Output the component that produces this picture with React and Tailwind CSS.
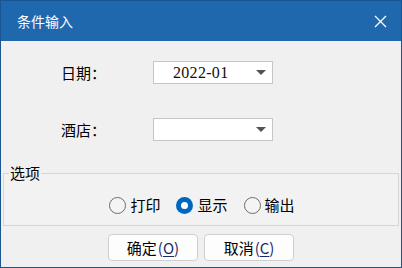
const cjk = { fontFamily: '"Noto Sans CJK SC", "Noto Sans", sans-serif' }

const Caret = () => (
  <svg width="10" height="5" viewBox="0 0 10 5" className="shrink-0">
    <polygon points="0,0 10,0 5,5" fill="#505550" />
  </svg>
)

const Select = ({ value }) => (
  <div className="w-[120px] h-[23px] bg-white border border-[#c6c6c6] flex items-center pl-[19px] pr-[6px]">
    <span
      className="flex-1 text-[16px] leading-none text-[#101010] tracking-[0.3px]"
      style={{ fontFamily: '"Liberation Serif", serif' }}
    >
      {value}
    </span>
    <Caret />
  </div>
)

const Radio = ({ label, checked }) => (
  <label className="flex items-center gap-[4px]">
    {checked ? (
      <span className="w-[17px] h-[17px] rounded-full bg-[#0067c0] flex items-center justify-center">
        <span className="w-[7px] h-[7px] rounded-full bg-white" />
      </span>
    ) : (
      <span className="w-[17px] h-[17px] rounded-full border border-[#6b6b6b] bg-[#f4f4f4]" />
    )}
    <span className="text-[15px] leading-[20px] text-black">{label}</span>
  </label>
)

const Button = ({ text, hotkey }) => (
  <button className="w-[90px] h-[27px] rounded-[4px] border border-[#cfcfcf] bg-[#fdfdfd] text-[15px] leading-none text-black flex items-center justify-center">
    {text}
    <span className="ml-[1px] text-[#1c2a6a]">
      (<span className="underline underline-offset-2">{hotkey}</span>)
    </span>
  </button>
)

export default function App() {
  return (
    <div className="w-[402px] h-[268px] bg-[#f0f0f0] border border-[#1a5593] flex flex-col" style={cjk}>
      {/* title bar */}
      <div className="h-[40px] bg-[#2068ae] flex items-center justify-between pl-[16px] pr-[14px]">
        <span className="text-white text-[14px] leading-none">条件输入</span>
        <svg width="13" height="13" viewBox="0 0 13 13">
          <path d="M1 1L12 12M12 1L1 12" stroke="white" strokeWidth="1.3" />
        </svg>
      </div>

      {/* form rows */}
      <div className="flex items-center mt-[20px] pl-[60px]">
        <span className="w-[92px] text-[15px] leading-none text-black">日期：</span>
        <Select value="2022-01" />
      </div>
      <div className="flex items-center mt-[34px] pl-[60px]">
        <span className="w-[92px] text-[15px] leading-none text-black">酒店：</span>
        <Select value="" />
      </div>

      {/* options group */}
      <fieldset className="mt-[22px] mx-[2px] border border-[#d6d6d6] bg-[#f2f2f2] pt-[12px] pb-[10px]">
        <legend className="ml-[5px] px-[1px] text-[15px] leading-[20px] text-black">选项</legend>
        <div className="flex justify-center gap-[16px] pl-[2px]">
          <Radio label="打印" />
          <Radio label="显示" checked />
          <Radio label="输出" />
        </div>
      </fieldset>

      {/* buttons */}
      <div className="flex justify-center gap-[6px] mt-[8px]">
        <Button text="确定" hotkey="O" />
        <Button text="取消" hotkey="C" />
      </div>
    </div>
  )
}
